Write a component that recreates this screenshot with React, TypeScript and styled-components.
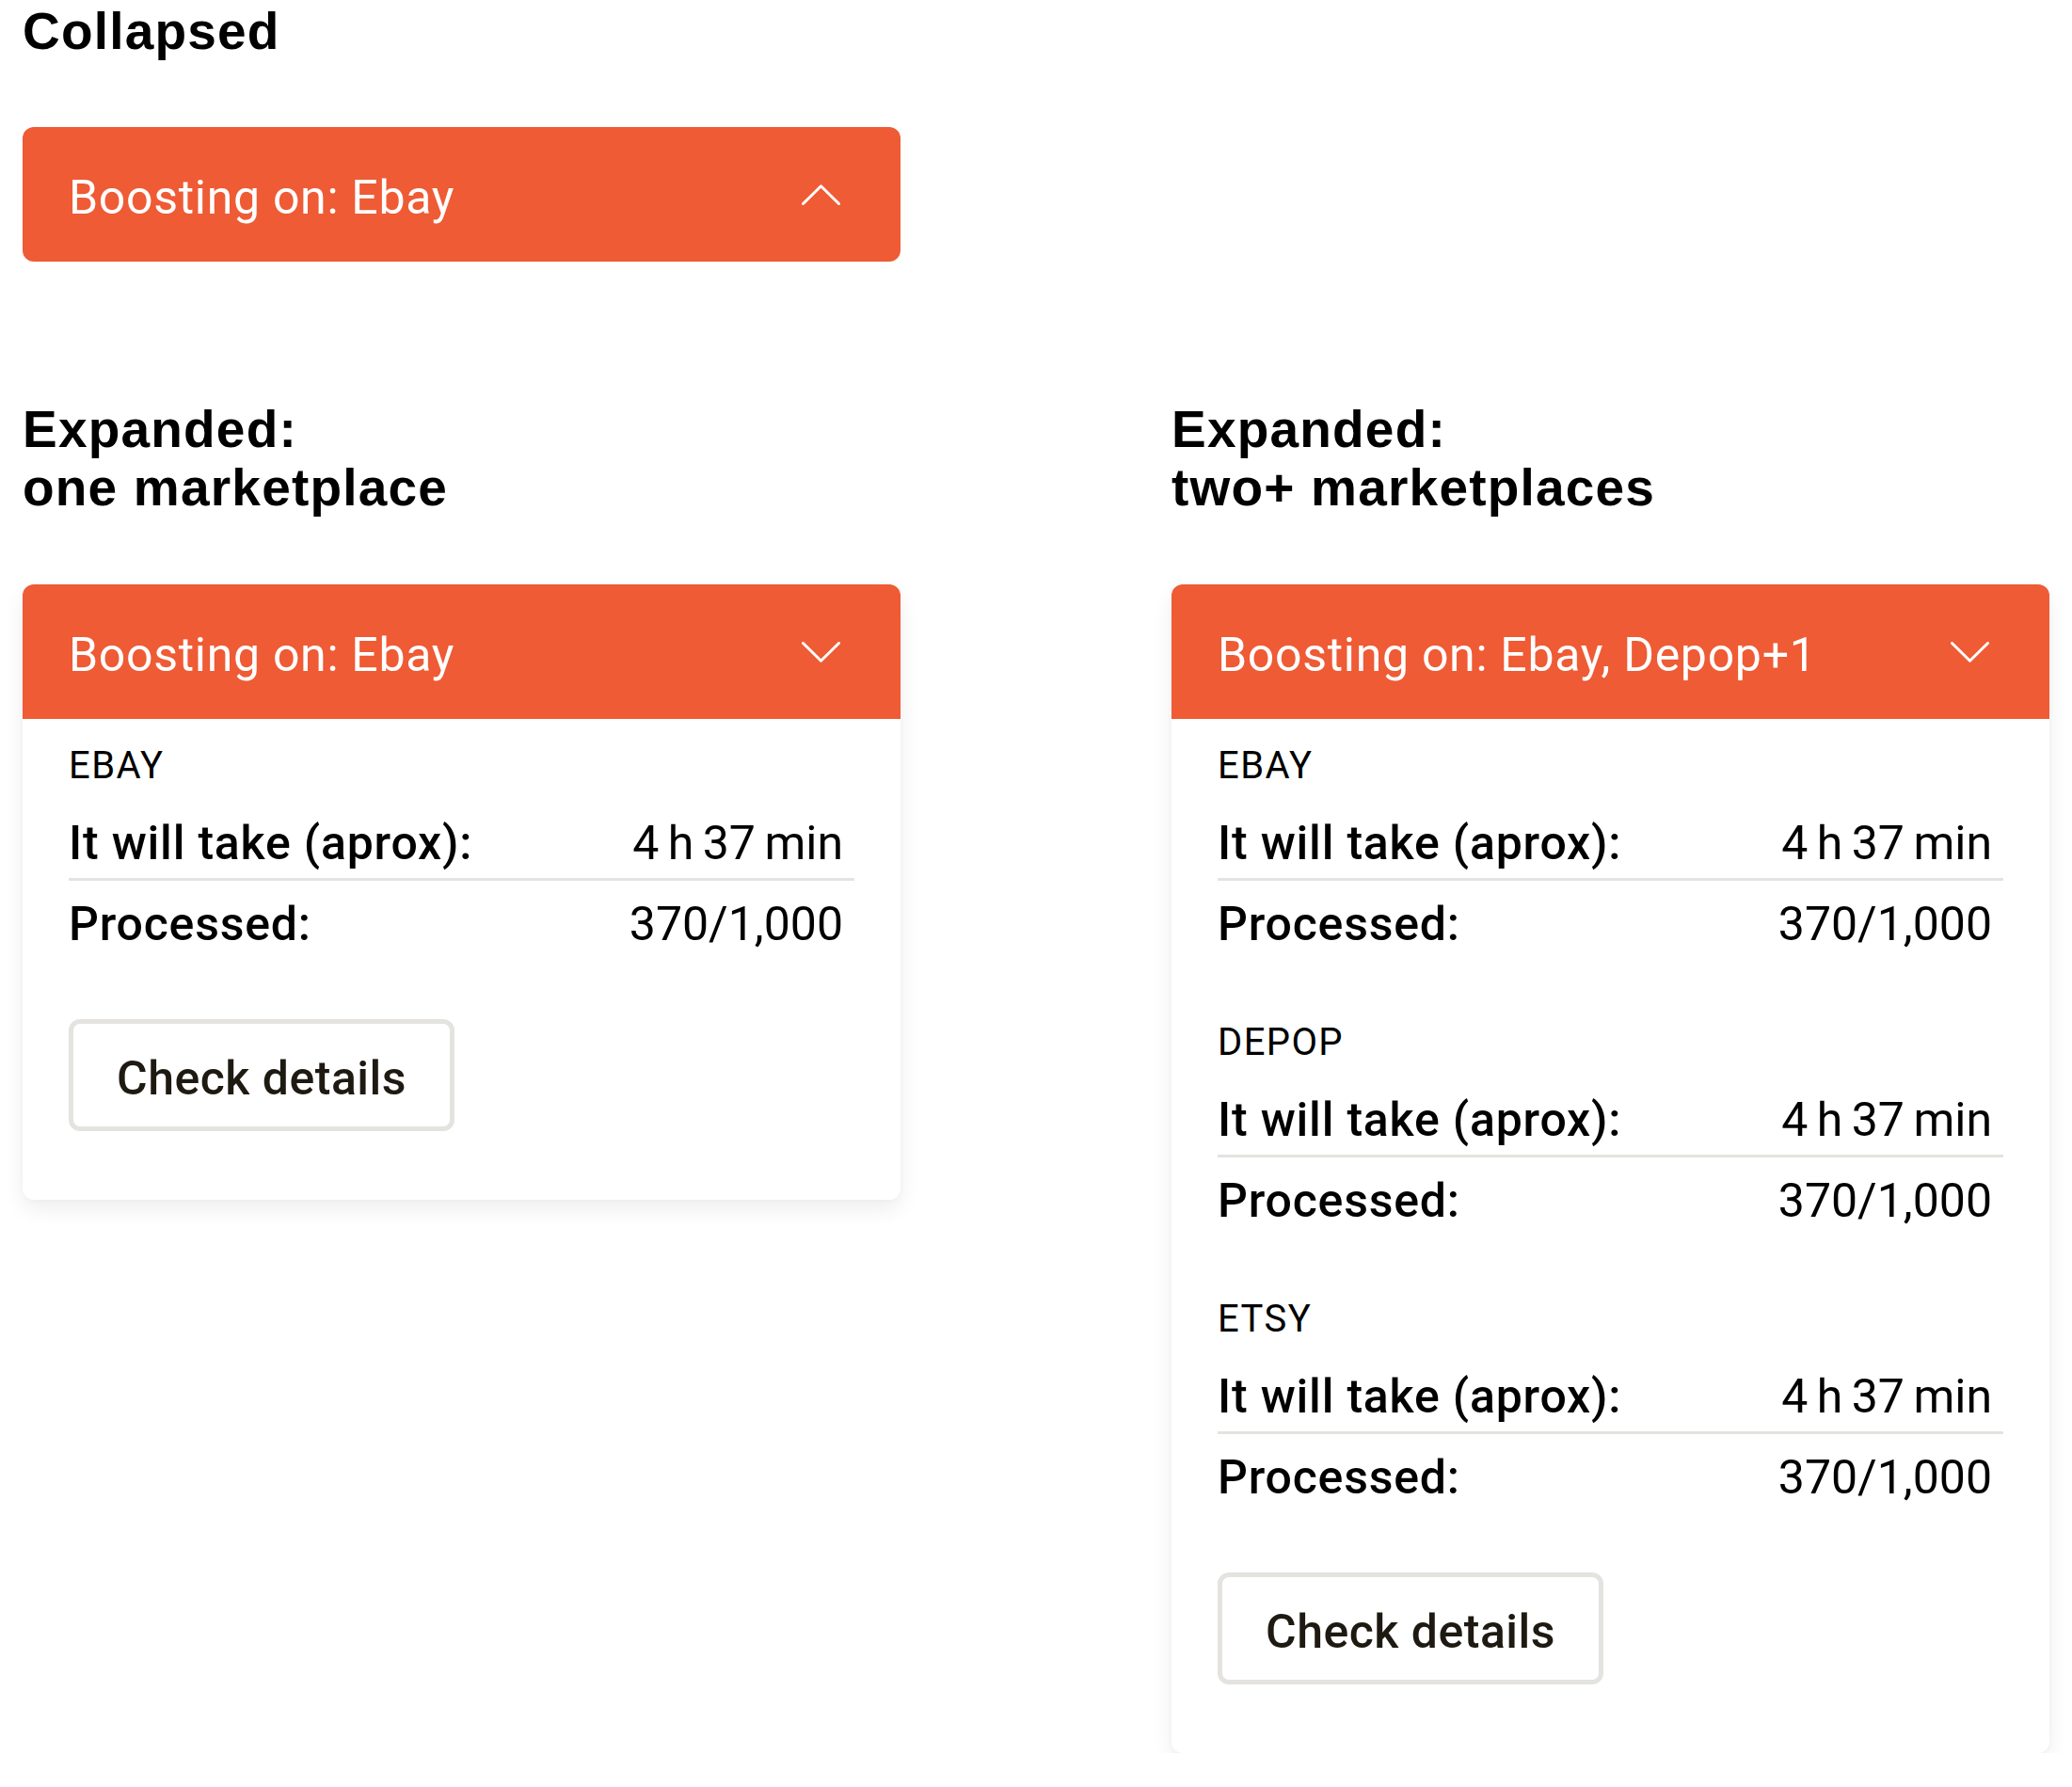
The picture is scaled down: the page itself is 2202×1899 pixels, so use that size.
import * as React from 'react'
import styled, { createGlobalStyle } from 'styled-components'

const GlobalStyle = createGlobalStyle`
  html, body {
    margin: 0;
    padding: 0;
    background: #ffffff;
  }
  body {
    font-family: Roboto, "Liberation Sans", Arial, sans-serif;
    color: #000000;
  }
`

const orange = '#EE5B35'
const line = '#E4E3DF'

const Page = styled.div`
  padding: 2px 0 0 24px;
  display: flex;
  flex-direction: column;
`

const Heading = styled.h2`
  margin: 0;
  font-family: "Liberation Sans", Arial, sans-serif;
  font-weight: 700;
  font-size: 55px;
  line-height: 62px;
  letter-spacing: 1.2px;
  color: #000;
`

const Collapsed = styled.section`
  width: 933px;
  display: flex;
  flex-direction: column;
  gap: 71px;
`

const Columns = styled.div`
  margin-top: 147px;
  display: grid;
  grid-template-columns: 933px 933px;
  column-gap: 288px;
  align-items: start;
`

const Column = styled.section`
  display: flex;
  flex-direction: column;
  gap: 72px;
`

const Card = styled.div`
  background: #fff;
  border-radius: 12px;
  box-shadow: 0 10px 22px rgba(0, 0, 0, 0.07), 0 0 6px rgba(0, 0, 0, 0.03);
`

interface HeaderProps {
  $open?: boolean
}

const Header = styled.div<HeaderProps>`
  box-sizing: border-box;
  height: 143px;
  padding: 6px 64px 0 49px;
  display: flex;
  align-items: center;
  justify-content: space-between;
  background: ${orange};
  color: #fff;
  border-radius: ${(p) => (p.$open ? '12px 12px 0 0' : '12px')};
`

const Title = styled.div`
  font-size: 50px;
  line-height: 60px;
  font-weight: 400;
  letter-spacing: 0.7px;
`

const Chevron = styled.svg`
  display: block;
  width: 41px;
  height: 22px;
  margin-bottom: 6px;
`

const Body = styled.div`
  padding: 28px 49px 73px;
  display: flex;
  flex-direction: column;
`

const Section = styled.div`
  & + & {
    margin-top: 74px;
  }
`

const Market = styled.div`
  font-size: 40px;
  line-height: 44px;
  font-weight: 400;
  letter-spacing: 1.4px;
  color: #000;
`

const Rows = styled.div`
  margin-top: 30px;
`

const Row = styled.div`
  display: flex;
  justify-content: space-between;
  line-height: 60px;
  font-size: 50px;
`

const Label = styled.span`
  font-weight: 500;
  letter-spacing: 0.8px;
`

const Value = styled.span`
  font-weight: 400;
  word-spacing: -3px;
  padding-right: 12px;
`

const Divider = styled.div`
  height: 3px;
  background: ${line};
  margin: 7px 0 16px;
`

const Button = styled.button`
  align-self: flex-start;
  margin-top: 71px;
  box-sizing: border-box;
  height: 119px;
  padding: 6px 46px 0;
  border: 5px solid ${line};
  border-radius: 12px;
  background: #fff;
  font-family: Roboto, "Liberation Sans", Arial, sans-serif;
  font-size: 50px;
  line-height: 60px;
  font-weight: 500;
  letter-spacing: 0.5px;
  color: #1E1A12;
  cursor: pointer;
`

const ChevronIcon = ({ up }: { up?: boolean }) => (
  <Chevron viewBox="0 0 41 22" fill="none">
    <path
      d={up ? 'M1.5 20.5 L20.5 1.8 L39.5 20.5' : 'M1.5 1.5 L20.5 20.2 L39.5 1.5'}
      stroke="#fff"
      strokeWidth="3"
      strokeLinecap="round"
      strokeLinejoin="round"
    />
  </Chevron>
)

interface Market {
  name: string
  time: string
  processed: string
}

const market = (name: string): Market => ({ name, time: '4 h 37 min', processed: '370/1,000' })

const MarketSection = ({ name, time, processed }: Market) => (
  <Section>
    <Market>{name}</Market>
    <Rows>
      <Row>
        <Label>It will take (aprox):</Label>
        <Value>{time}</Value>
      </Row>
      <Divider />
      <Row>
        <Label>Processed:</Label>
        <Value>{processed}</Value>
      </Row>
    </Rows>
  </Section>
)

const Expanded = ({ title, markets }: { title: string; markets: Market[] }) => (
  <Card>
    <Header $open>
      <Title>{title}</Title>
      <ChevronIcon />
    </Header>
    <Body>
      {markets.map((m) => (
        <MarketSection key={m.name} {...m} />
      ))}
      <Button>Check details</Button>
    </Body>
  </Card>
)

export default function App() {
  return (
    <>
      <GlobalStyle />
      <Page>
        <Collapsed>
          <Heading>Collapsed</Heading>
          <Header>
            <Title>Boosting on: Ebay</Title>
            <ChevronIcon up />
          </Header>
        </Collapsed>
        <Columns>
          <Column>
            <Heading>
              Expanded:
              <br />
              one marketplace
            </Heading>
            <Expanded title="Boosting on: Ebay" markets={[market('EBAY')]} />
          </Column>
          <Column>
            <Heading>
              Expanded:
              <br />
              two+ marketplaces
            </Heading>
            <Expanded
              title="Boosting on: Ebay, Depop+1"
              markets={[market('EBAY'), market('DEPOP'), market('ETSY')]}
            />
          </Column>
        </Columns>
      </Page>
    </>
  )
}
